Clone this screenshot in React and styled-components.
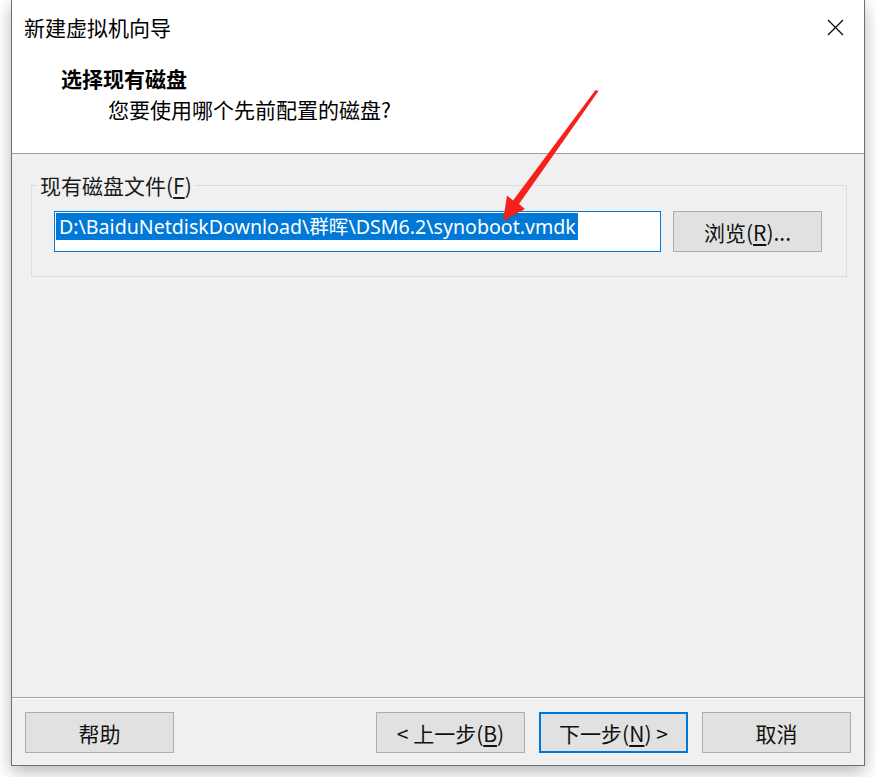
import React from "react";
import styled, { createGlobalStyle } from "styled-components";

const GlobalStyle = createGlobalStyle`
  html, body {
    margin: 0;
    padding: 0;
    background: #ffffff;
  }
  body {
    font-family: "Noto Sans", "Noto Sans CJK SC", sans-serif;
    color: #000;
  }
`;

const Page = styled.div`
  position: relative;
  width: 876px;
  height: 777px;
  padding-left: 11px;
  box-sizing: border-box;
`;

const Window = styled.div`
  width: 854px;
  height: 766px;
  box-sizing: border-box;
  border: 1px solid #707070;
  border-top: none;
  background: #f0f0f0;
  display: flex;
  flex-direction: column;
  box-shadow: 0 6px 16px rgba(0, 0, 0, 0.28);
`;

const Header = styled.div`
  height: 154px;
  box-sizing: border-box;
  background: #ffffff;
  border-bottom: 1px solid #a0a0a0;
  display: flex;
  flex-direction: column;
`;

const TitleBar = styled.div`
  height: 54px;
  display: flex;
  align-items: center;
  justify-content: space-between;
  padding: 0 20px 0 12px;
`;

const Title = styled.div`
  font-family: "Noto Sans CJK SC", sans-serif;
  font-size: 21px;
  line-height: 28px;
`;

const Heading = styled.div`
  font-family: "Noto Sans CJK SC", sans-serif;
  font-weight: 700;
  font-size: 21px;
  line-height: 28px;
  margin: 10px 0 0 49px;
`;

const Subtitle = styled.div`
  font-family: "Noto Sans CJK SC", sans-serif;
  font-size: 21px;
  line-height: 28px;
  margin: 3px 0 0 96px;
`;

const Body = styled.div`
  flex: 1;
  padding-top: 18px;
`;

const Group = styled.fieldset`
  margin: 0 18px 0 19px;
  padding: 0 24px 24px 6px;
  border: 1px solid #dcdcdc;
`;

const Legend = styled.legend`
  padding: 0 2px;
  font-family: "Noto Sans CJK SC", sans-serif;
  font-size: 21px;
  line-height: 26px;
  color: #1a1a1a;
`;

const Row = styled.div`
  display: flex;
  gap: 12px;
  margin: 13px 0 0 16px;
`;

const TextBox = styled.div`
  width: 607px;
  height: 41px;
  box-sizing: border-box;
  border: 1px solid #0078d7;
  background: #fff;
  padding: 1px 1px;
  font-family: "Noto Sans", "Noto Sans CJK SC", sans-serif;
  font-size: 19.6px;
  white-space: nowrap;
  overflow: hidden;
`;

const Selected = styled.span`
  display: inline-block;
  background: #0078d7;
  color: #fff;
  line-height: 27px;
  padding: 0 2px 0 3px;
`;

const Button = styled.button`
  width: 149px;
  height: 41px;
  box-sizing: border-box;
  background: #e1e1e1;
  border: ${(p) => (p.$default ? "2px solid #0078d7" : "1px solid #adadad")};
  font-family: "Noto Sans CJK SC", sans-serif;
  font-size: 21px;
  color: #111;
  padding: 0;
  display: flex;
  align-items: center;
  justify-content: center;
  cursor: default;
`;

const Key = styled.span`
  text-decoration: underline;
  text-underline-offset: 3px;
`;

const Footer = styled.div`
  height: 68px;
  box-sizing: border-box;
  border-top: 1px solid #a0a0a0;
  box-shadow: inset 0 1px 0 #ffffff;
  display: flex;
  align-items: flex-start;
  padding: 14px 13px 0 13px;
`;

const Spacer = styled.div`
  flex: 1;
`;

const ButtonGroup = styled.div`
  display: flex;
  gap: 14px;
`;

const Arrow = styled.svg`
  position: absolute;
  left: 0;
  top: 0;
  pointer-events: none;
`;

const CloseIcon = () => (
  <svg width="17" height="17" viewBox="0 0 17 17">
    <path d="M1 1 L16 16 M16 1 L1 16" stroke="#000" strokeWidth="1.2" fill="none" />
  </svg>
);

export default function App() {
  return (
    <>
      <GlobalStyle />
      <Page>
        <Window>
          <Header>
            <TitleBar>
              <Title>新建虚拟机向导</Title>
              <CloseIcon />
            </TitleBar>
            <Heading>选择现有磁盘</Heading>
            <Subtitle>您要使用哪个先前配置的磁盘?</Subtitle>
          </Header>
          <Body>
            <Group>
              <Legend>
                现有磁盘文件(<Key>F</Key>)
              </Legend>
              <Row>
                <TextBox>
                  <Selected>D:\BaiduNetdiskDownload\群晖\DSM6.2\synoboot.vmdk</Selected>
                </TextBox>
                <Button>
                  浏览(<Key>R</Key>)...
                </Button>
              </Row>
            </Group>
          </Body>
          <Footer>
            <Button>帮助</Button>
            <Spacer />
            <ButtonGroup>
              <Button>
                &lt; 上一步(<Key>B</Key>)
              </Button>
              <Button $default>
                下一步(<Key>N</Key>) &gt;
              </Button>
              <Button>取消</Button>
            </ButtonGroup>
          </Footer>
        </Window>
        <Arrow width="876" height="777" viewBox="0 0 876 777">
          <polygon
            points="598.5,91 595.5,90 513,200.5 507,195.5 503,221 525,209 519,204"
            fill="#f5221b"
          />
        </Arrow>
      </Page>
    </>
  );
}
